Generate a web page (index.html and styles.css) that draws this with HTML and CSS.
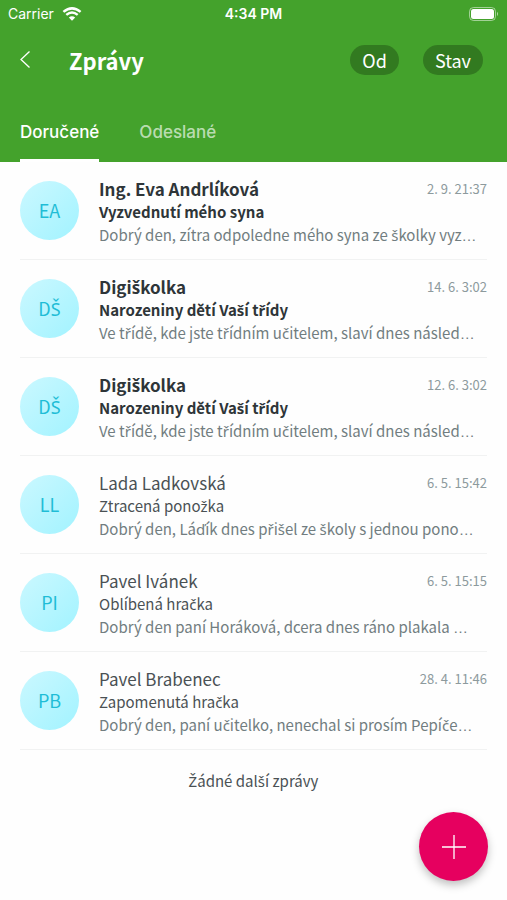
FILE: index.html
```html
<!DOCTYPE html>
<html lang="cs">
<head>
<meta charset="utf-8">
<meta name="viewport" content="width=device-width, initial-scale=1">
<title>Zprávy</title>
<link rel="stylesheet" href="styles.css">
<script src="carons.js" defer></script>
</head>
<body>
<header class="header">
  <div class="status">
    <div class="carrier">
      <span>Carrier</span>
      <svg width="20" height="14" viewBox="0 0 20 14" aria-hidden="true">
        <path d="M10 13.8 L6.8 10.5 Q10 7.8 13.2 10.5 Z" fill="#fff"/>
        <path d="M4.3 7.9 Q10 3.2 15.7 7.9 M1.4 4.9 Q10 -2.1 18.6 4.9" fill="none" stroke="#fff" stroke-width="2.5"/>
      </svg>
    </div>
    <time class="clock">4:34 PM</time>
    <svg class="battery" width="30" height="14" viewBox="0 0 30 14" aria-hidden="true">
      <rect x="0.5" y="0.5" width="26" height="13" rx="4" fill="none" stroke="#fff" stroke-opacity=".5"/>
      <rect x="2" y="2" width="23" height="10" rx="2.5" fill="#fff"/>
      <path d="M28 4.8 Q30 7 28 9.2 Z" fill="#fff" fill-opacity=".6"/>
    </svg>
  </div>
  <div class="toolbar">
    <button class="back" type="button" aria-label="Zpět">
      <svg width="12" height="20" viewBox="0 0 12 20" aria-hidden="true"><path d="M9.5 1.5 L1 9.5 L9.5 17.5" fill="none" stroke="#fff" stroke-width="1.3"/></svg>
    </button>
    <h1 class="title">Zprávy</h1>
    <button class="chip" type="button">Od</button>
    <button class="chip" type="button">Stav</button>
  </div>
  <nav class="tabs">
    <a class="tab active" href="#dorucene">Doručené</a>
    <a class="tab" href="#odeslane">Odeslané</a>
  </nav>
</header>
<main>
  <ul class="list">
    <li class="message unread">
      <span class="avatar">EA</span>
      <div class="body">
        <div class="top"><h2 class="name">Ing. Eva Andrlíková</h2><time class="date">2. 9. 21:37</time></div>
        <p class="subject">Vyzvednutí mého syna</p>
        <p class="preview">Dobrý den, zítra odpoledne mého syna ze školky vyz<span class="more">…</span></p>
      </div>
    </li>
    <li class="message unread">
      <span class="avatar">DŠ</span>
      <div class="body">
        <div class="top"><h2 class="name">Digiškolka</h2><time class="date">14. 6. 3:02</time></div>
        <p class="subject">Narozeniny dětí Vaší třídy</p>
        <p class="preview">Ve třídě, kde jste třídním učitelem, slaví dnes násled<span class="more">…</span></p>
      </div>
    </li>
    <li class="message unread">
      <span class="avatar">DŠ</span>
      <div class="body">
        <div class="top"><h2 class="name">Digiškolka</h2><time class="date">12. 6. 3:02</time></div>
        <p class="subject">Narozeniny dětí Vaší třídy</p>
        <p class="preview">Ve třídě, kde jste třídním učitelem, slaví dnes násled<span class="more">…</span></p>
      </div>
    </li>
    <li class="message">
      <span class="avatar">LL</span>
      <div class="body">
        <div class="top"><h2 class="name">Lada Ladkovská</h2><time class="date">6. 5. 15:42</time></div>
        <p class="subject">Ztracená ponožka</p>
        <p class="preview">Dobrý den, Láďík dnes přišel ze školy s jednou pono<span class="more">…</span></p>
      </div>
    </li>
    <li class="message">
      <span class="avatar">PI</span>
      <div class="body">
        <div class="top"><h2 class="name">Pavel Ivánek</h2><time class="date">6. 5. 15:15</time></div>
        <p class="subject">Oblíbená hračka</p>
        <p class="preview">Dobrý den paní Horáková, dcera dnes ráno plakala <span class="more">…</span></p>
      </div>
    </li>
    <li class="message">
      <span class="avatar">PB</span>
      <div class="body">
        <div class="top"><h2 class="name">Pavel Brabenec</h2><time class="date">28. 4. 11:46</time></div>
        <p class="subject">Zapomenutá hračka</p>
        <p class="preview">Dobrý den, paní učitelko, nenechal si prosím Pepíče<span class="more">…</span></p>
      </div>
    </li>
  </ul>
  <p class="end">Žádné další zprávy</p>
</main>
<button class="fab" type="button" aria-label="Nová zpráva">
  <svg width="24" height="24" viewBox="0 0 24 24" aria-hidden="true"><path d="M12 0 V24 M0 12 H24" stroke="#fff" stroke-width="1.3"/></svg>
</button>
</body>
</html>
```
FILE: carons.js
```js
const walker = document.createTreeWalker(document.querySelector("main"), NodeFilter.SHOW_TEXT);
const nodes = [];
while (walker.nextNode()) nodes.push(walker.currentNode);

for (const node of nodes) {
  const parts = node.data.split(/([čďňřšťžČĎŇŘŠŤŽ]+)/);
  if (parts.length === 1) continue;
  node.replaceWith(...parts.map((part, i) => {
    if (i % 2 === 0) return part;
    const span = document.createElement("span");
    span.className = "caron";
    span.textContent = part;
    return span;
  }));
}
```
FILE: styles.css
```css
* {
  box-sizing: border-box;
  margin: 0;
  padding: 0;
}

body {
  min-height: 100vh;
  background: #fefefe;
  color: #4a5154;
  font-family: "Noto Sans CJK SC", "Noto Sans", sans-serif;
  font-size: 15px;
}

button {
  border: 0;
  background: none;
  color: inherit;
  font-family: inherit;
}

.header {
  background: #44a22c;
  color: #fff;
}

.status {
  display: grid;
  grid-template-columns: 1fr auto 1fr;
  align-items: center;
  height: 28px;
  padding: 0 8px;
  font: 14px/28px Inter, sans-serif;
}

.carrier {
  display: flex;
  align-items: center;
  gap: 8px;
}

.clock {
  font-weight: 600;
}

.battery {
  justify-self: end;
}

.toolbar {
  display: flex;
  align-items: center;
  height: 64px;
  padding: 0 24px 0 20px;
}

.back {
  width: 49px;
  height: 40px;
  text-align: left;
}

.back svg {
  display: block;
}

.title {
  flex: 1;
  font-size: 22px;
  line-height: 32px;
}

.chip {
  height: 30px;
  margin-left: 24px;
  padding: 0 12px;
  border-radius: 15px;
  background: #327a20;
  font-size: 18px;
  line-height: 30px;
}

.tabs {
  display: flex;
  gap: 40px;
  height: 70px;
  padding: 0 20px;
}

.tab {
  padding-top: 26px;
  border-bottom: 3px solid transparent;
  color: rgba(255, 255, 255, .65);
  font: 500 17px/28px Inter, sans-serif;
  text-decoration: none;
}

.tab.active {
  border-color: #fff;
  color: #fff;
}

.list {
  padding: 0 20px;
  list-style: none;
}

.message {
  display: flex;
  gap: 20px;
  height: 98px;
  padding-top: 16px;
  border-bottom: 1px solid #f1f2f2;
}

.avatar {
  flex: none;
  width: 59px;
  height: 59px;
  margin-top: 3px;
  border-radius: 50%;
  background: linear-gradient(135deg, #cbf8ff, #a2f3ff);
  color: #1fbdd6;
  font-size: 18px;
  line-height: 59px;
  text-align: center;
}

.body {
  flex: 1;
  min-width: 0;
}

.top {
  display: flex;
  justify-content: space-between;
}

.name {
  font-size: 17px;
  font-weight: 400;
  line-height: 22px;
}

.date {
  color: #8d9a9d;
  font-size: 13px;
  line-height: 22px;
}

.subject {
  line-height: 23px;
}

.preview {
  color: #717d80;
  line-height: 23px;
  white-space: nowrap;
}

.caron {
  font-family: "Noto Sans", sans-serif;
  line-height: 1;
}

.more {
  font-family: "Liberation Sans", sans-serif;
  line-height: 1;
}

.unread .name,
.unread .subject {
  color: #2e3538;
  font-weight: 700;
}

.end {
  padding-top: 20px;
  line-height: 22px;
  text-align: center;
}

.fab {
  position: fixed;
  right: 19px;
  bottom: 19px;
  display: grid;
  place-items: center;
  width: 69px;
  height: 69px;
  border-radius: 50%;
  background: #e6005f;
  box-shadow: 0 4px 8px rgba(0, 0, 0, .25);
}
```
